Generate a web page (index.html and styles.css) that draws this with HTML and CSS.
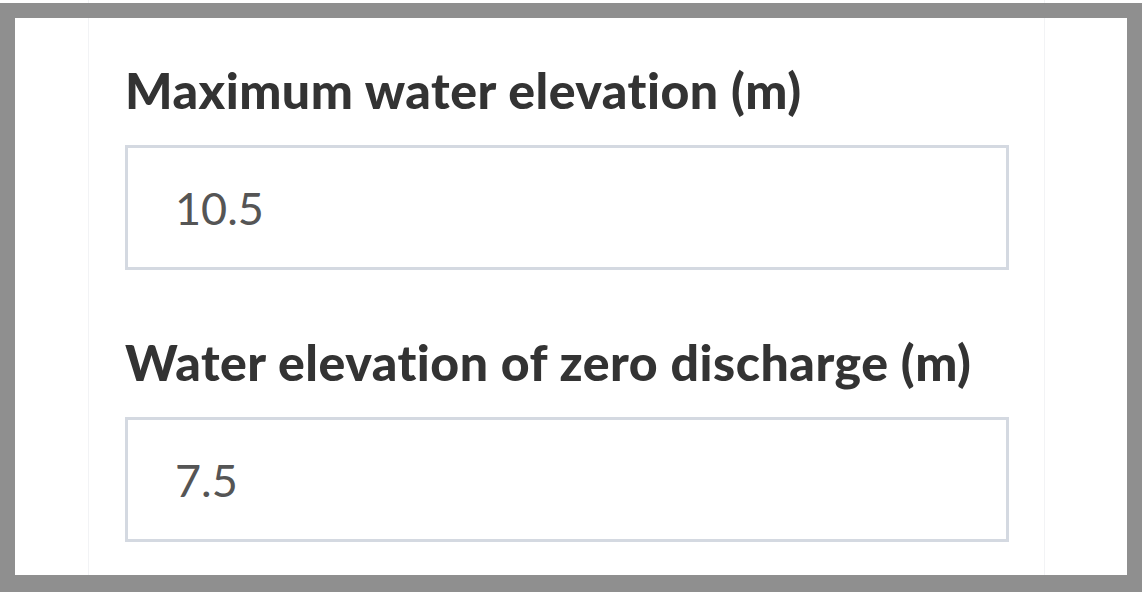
FILE: index.html
```html
<!DOCTYPE html>
<html>
<head>
<meta charset="utf-8">
<link rel="stylesheet" href="styles.css">
</head>
<body>
<div class="panel">
  <div class="field">
    <label class="label">Maximum water elevation (m)</label>
    <div class="input"><span class="value">10.5</span></div>
  </div>
  <div class="field">
    <label class="label">Water elevation of zero discharge (m)</label>
    <div class="input"><span class="value">7.5</span></div>
  </div>
</div>
<div class="frame"></div>
</body>
</html>
```
FILE: styles.css
```css
html, body {
  margin: 0;
  padding: 0;
  background: #ffffff;
  overflow: hidden;
  height: 100%;
}
body {
  font-family: "Lato", "Liberation Sans", sans-serif;
}
.panel {
  margin-left: 88px;
  width: 957px;
  box-sizing: border-box;
  height: 100%;
  border-left: 1px solid #f2f3f5;
  border-right: 1px solid #f2f3f5;
  padding: 58px 0 0 36px;
  display: flex;
  flex-direction: column;
  gap: 60px;
}
.field {
  display: flex;
  flex-direction: column;
  gap: 23px;
}
.label {
  font-weight: 900;
  font-size: 50px;
  line-height: 64px;
  color: #333333;
  white-space: nowrap;
  font-variant-ligatures: none;
  letter-spacing: 0.5px;
}
.input {
  width: 884px;
  height: 125px;
  box-sizing: border-box;
  border: 3px solid #d4d9e1;
  display: flex;
  align-items: center;
  padding-left: 47px;
}
.value {
  font-size: 45px;
  color: #555555;
}
.frame {
  position: absolute;
  left: 0;
  top: 3px;
  width: 1142px;
  height: 589px;
  box-sizing: border-box;
  border: 15px solid #8f8f8f;
  border-bottom-width: 17px;
  pointer-events: none;
}
```
